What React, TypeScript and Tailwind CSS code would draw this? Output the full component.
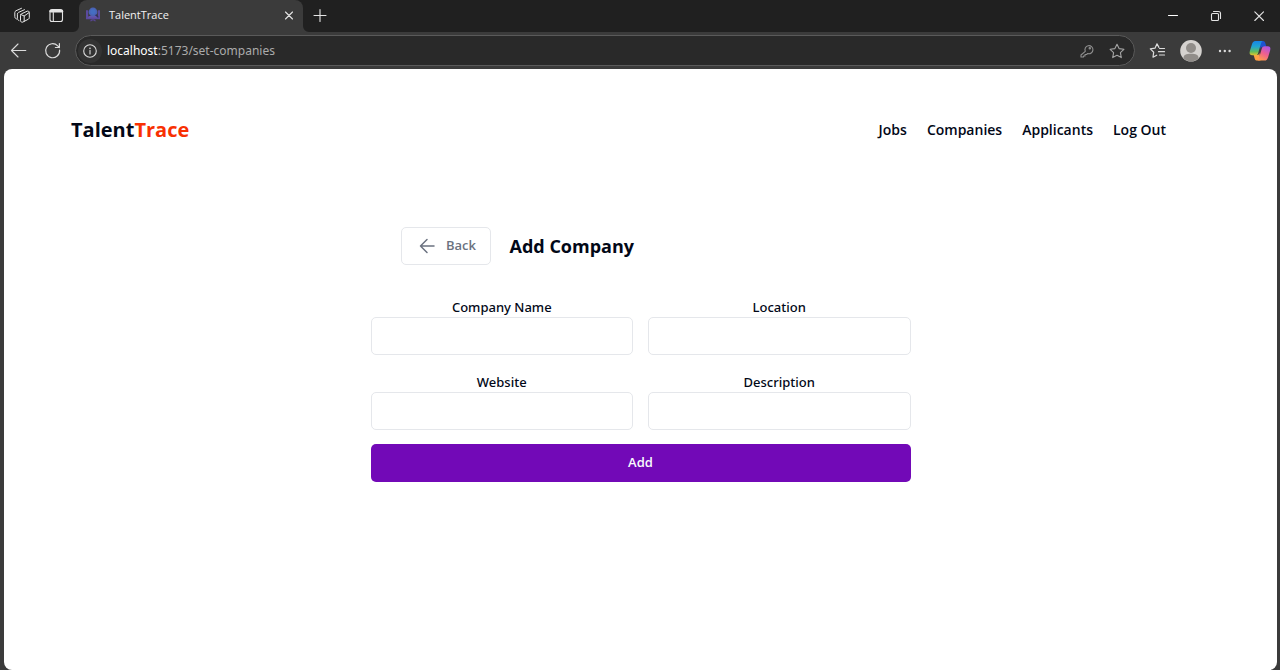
import type { ReactNode } from "react";

const NAV = ["Jobs", "Companies", "Applicants", "Log Out"];

const FIELDS = [
  { id: "name", label: "Company Name" },
  { id: "location", label: "Location" },
  { id: "website", label: "Website" },
  { id: "description", label: "Description" },
];

function Glyph({ size = 16, children, width = 1.1 }: { size?: number; children: ReactNode; width?: number }) {
  return (
    <svg
      width={size}
      height={size}
      viewBox={`0 0 ${size} ${size}`}
      fill="none"
      stroke="currentColor"
      strokeWidth={width}
      strokeLinecap="round"
      strokeLinejoin="round"
      className="shrink-0"
      aria-hidden="true"
    >
      {children}
    </svg>
  );
}

function IconButton({ label, className, children }: { label: string; className: string; children: ReactNode }) {
  return (
    <button type="button" aria-label={label} className={`flex shrink-0 items-center justify-center ${className}`}>
      {children}
    </button>
  );
}

function TabStrip() {
  return (
    <div className="flex h-8 items-center bg-[#202020] text-[#e4e4e4]">
      <div className="flex w-[79px] shrink-0 items-center gap-[18px] pb-0.5 pl-3.5">
        <IconButton label="Workspaces" className="size-4">
          <Glyph width={1}>
            <path d="M6.500 8.300c0-.6.300-1.100.8-1.400l5.900-2.700c1-.4 2.100.2 2.100 1.300v5.200c0 .6-.3 1.100-.8 1.400l-5.700 3c-1.100.5-2.300-.2-2.300-1.400z" />
            <path d="m6.800 7.500 3.400 1.500 4.800-3.400M10.200 9v5.300" />
            <path d="M5 13.600c-1-.4-1.600-1-1.600-2.200V7.200c0-.8.400-1.500 1.100-1.800l6-2.700" />
            <path d="M2.500 12C1.300 11.500.8 10.800.8 9.500V5.600c0-.8.400-1.500 1.100-1.800L7.500 1.300" />
          </Glyph>
        </IconButton>
        <IconButton label="Tab actions" className="size-4">
          <Glyph>
            <rect x="2" y="2.500" width="12.500" height="12" rx="2" />
            <path d="M2.800 4.200h11" strokeWidth="2.800" />
            <path d="M5.300 5.500v9" />
          </Glyph>
        </IconButton>
      </div>
      <div className="relative flex h-8 w-[224px] shrink-0 items-center rounded-t-lg bg-[#3b3b3b] pr-1.5 pb-0.5 pl-[7px]">
        <svg className="absolute bottom-0 -left-1.5" width="6" height="6" aria-hidden="true">
          <path d="M6 0v6H0a6 6 0 0 0 6-6z" fill="#3b3b3b" />
        </svg>
        <svg className="absolute -right-1.5 bottom-0" width="6" height="6" aria-hidden="true">
          <path d="M0 0v6h6a6 6 0 0 1-6-6z" fill="#3b3b3b" />
        </svg>
        <svg width="14" height="16" viewBox="0 0 14 16" className="shrink-0" aria-hidden="true">
          <path d="M0 3.200h2.200v6.300h9.600V3.200H14v9.100H0z" fill="#5b4a9e" />
          <path d="M2 10.500c1-1.800 2.600-2 5-2s4 .2 5 2z" fill="#6656ad" />
          <circle cx="7" cy="5" r="4.400" fill="#4a62b4" />
          <circle cx="7" cy="4.700" r="2.700" fill="#456ec2" />
          <path d="m9.700 7.700 2.600 2.700" stroke="#30305f" strokeWidth="1.300" />
          <path d="M5.700 12.300h2.600l2 2H8.500L7 13.200l-1.500 1.100H3.700z" fill="#57458f" />
        </svg>
        <span className="ml-[9px] flex-1 text-[11px] leading-4 text-[#f2f2f2]">TalentTrace</span>
        <IconButton label="Close tab" className="size-4">
          <Glyph>
            <path d="m4.500 5 7 7m0-7-7 7" />
          </Glyph>
        </IconButton>
      </div>
      <IconButton label="New tab" className="ml-2 size-4 pb-0.5">
        <Glyph>
          <path d="M9 2.500v12M3 8.500h12" />
        </Glyph>
      </IconButton>
      <div className="ml-auto flex items-center gap-[27px] pr-[13px]">
        <IconButton label="Minimize" className="size-4">
          <Glyph>
            <path d="M3.500 7.500h9" stroke="#fff" />
          </Glyph>
        </IconButton>
        <IconButton label="Restore" className="size-4">
          <Glyph>
            <rect x="3.500" y="5.500" width="7" height="7" rx="1" />
            <path d="M5.500 3.500h5a2 2 0 0 1 2 2v5" />
          </Glyph>
        </IconButton>
        <IconButton label="Close" className="size-4">
          <Glyph>
            <path d="m3.800 3.800 8.700 8.700m0-8.700-8.700 8.700" />
          </Glyph>
        </IconButton>
      </div>
    </div>
  );
}

function Toolbar() {
  return (
    <div className="flex h-[37px] items-center bg-[#3b3b3b] pr-[9px] pl-2.5 text-[#dcdcdc]">
      <IconButton label="Back" className="size-[18px]">
        <Glyph size={18}>
          <path d="M15.800 8.500H1.500M8 2 1.500 8.500 8 15" />
        </Glyph>
      </IconButton>
      <IconButton label="Refresh" className="ml-4 size-[18px]">
        <Glyph size={18} width={1.2}>
          <path d="M15.600 8.200A7 7 0 1 1 13.700 3.900L15.400 5.500M15.400 1.500v4h-4" />
        </Glyph>
      </IconButton>
      <div className="ml-[13px] flex h-[31px] min-w-0 flex-1 items-center rounded-full border border-[#5a5a5a] bg-[#292929] pr-[9px] pl-[2px]">
        <button
          type="button"
          aria-label="Site information"
          className="flex size-6 shrink-0 items-center justify-center rounded-full bg-[#333333]"
        >
          <Glyph size={14}>
            <circle cx="7" cy="7" r="6.300" />
            <path d="M7 6.500v3.500" />
            <circle cx="7" cy="4.300" r=".3" />
          </Glyph>
        </button>
        <div className="ml-[5px] min-w-0 flex-1 truncate font-['Noto_Sans',sans-serif] text-[12px] leading-5 text-[#ababab]">
          <span className="text-white">localhost</span>:5173/set-companies
        </div>
        <IconButton label="Saved passwords" className="size-4 text-[#8f8f8f]">
          <Glyph>
            <path d="M6.300 8.300a4 4 0 1 1 2.500 2.200L7.500 11.500H6v1.500H4.500v1H2v-2z" />
            <circle cx="10.800" cy="5.300" r=".7" />
          </Glyph>
        </IconButton>
        <IconButton label="Add to favorites" className="ml-3.5 size-4 text-[#a4a4a4]">
          <Glyph>
            <path d="m8 1.200 2.100 4.400 4.800.7-3.500 3.400.9 4.900L8 12.300l-4.300 2.300.9-4.900L1.100 6.300l4.800-.7z" />
          </Glyph>
        </IconButton>
      </div>
      <IconButton label="Favorites" className="ml-3.5 size-[18px]">
        <Glyph size={18} width={1.2}>
          <path d="M9.900 5.400 8 1.800 6 6.200l-4.700.7L4.700 10.200 4 15.200l3.700-2" />
          <path d="M10.500 6.500h5M9.500 9.700h6M10.500 13h5" />
        </Glyph>
      </IconButton>
      <IconButton label="Profile" className="ml-[13px] size-[22px]">
        <svg width="22" height="22" viewBox="0 0 22 22" aria-hidden="true">
          <circle cx="11" cy="10.800" r="10.800" fill="#d5d2cf" />
          <circle cx="11" cy="8" r="5" fill="#918d89" />
          <path d="M3.500 18.300c0-3.500 2.500-4.500 7.500-4.500s7.500 1 7.500 4.500a10.500 10.500 0 0 1-15 0z" fill="#918d89" />
        </svg>
      </IconButton>
      <IconButton label="Settings and more" className="ml-[15px] size-4">
        <svg width="16" height="16" fill="currentColor" aria-hidden="true">
          <circle cx="3" cy="8" r="1.200" />
          <circle cx="7.800" cy="8" r="1.200" />
          <circle cx="12.600" cy="8" r="1.200" />
        </svg>
      </IconButton>
      <IconButton label="Copilot" className="ml-4 size-[22px]">
        <svg width="22" height="22" viewBox="0 0 22 22" aria-hidden="true">
          <defs>
            <linearGradient id="cool" x1="0" y1="0" x2="0" y2="1">
              <stop offset="0" stopColor="#1685e8" />
              <stop offset=".4" stopColor="#21a6cf" />
              <stop offset=".75" stopColor="#62bd5c" />
              <stop offset="1" stopColor="#e6c62c" />
            </linearGradient>
            <linearGradient id="warm" x1="0.800" y1="0" x2="0.300" y2="1">
              <stop offset="0" stopColor="#a855e8" />
              <stop offset=".5" stopColor="#ee5f91" />
              <stop offset="1" stopColor="#ff9a4c" />
            </linearGradient>
          </defs>
          <path d="M10.500 1H14c1.500 0 2 1 2.500 2.700l.9 3h-3.200c-1.400 0-2.200.7-2.700 2.200z" fill="#1d52cf" />
          <path d="M11.500 20.600H8c-1.500 0-2-1-2.500-2.700l-.8-2.800h3c1.400 0 2.200-.7 2.700-2.200z" fill="#ffa244" />
          <path d="M14 1H6.500c-2 0-3 1.500-3.600 3.400L.8 11.300C.1 13.800 1 15.300 3.400 15.300h3.200c1.500 0 2.200-.9 2.600-2.300l2.700-9.200C12.300 2.200 12.800 1.300 14 1z" fill="url(#cool)" />
          <path d="M8 20.600h7.500c2 0 3-1.500 3.600-3.400l2.100-6.900c.7-2.500-.2-4-2.600-4h-3.200c-1.500 0-2.200.9-2.600 2.300l-2.700 9.200c-.4 1.600-.9 2.500-2.100 2.800z" fill="url(#warm)" />
        </svg>
      </IconButton>
    </div>
  );
}

function SiteHeader() {
  return (
    <header className="flex items-center justify-between pt-[45px] pr-[111px] pl-[67px]">
      <a href="#" className="text-[20px] leading-8 font-bold text-[#020817]">
        Talent<span className="text-[#f83002]">Trace</span>
      </a>
      <nav className="flex gap-5 text-[14px] leading-6 font-semibold text-[#020817]">
        {NAV.map((item) => (
          <a key={item} href="#">
            {item}
          </a>
        ))}
      </nav>
    </header>
  );
}

function CompanyForm() {
  return (
    <form className="mx-auto mt-[81px] w-full max-w-[540px]" onSubmit={(e) => e.preventDefault()}>
      <div className="flex items-center gap-[19px] px-[30px]">
        <button
          type="button"
          className="flex h-[38px] w-[90px] items-center justify-center gap-[11px] rounded-[5px] border border-[#e5e7eb] pl-1 text-[13px] font-semibold text-[#6b7280]"
        >
          <Glyph width={1.5}>
            <path d="M15 8H1.500M8 1.500 1.500 8 8 14.500" />
          </Glyph>
          Back
        </button>
        <h1 className="text-[18px] leading-7 font-bold text-[#020817]">Add Company</h1>
      </div>
      <div className="mt-8 grid grid-cols-2 gap-x-[15px] gap-y-[17px]">
        {FIELDS.map(({ id, label }) => (
          <div key={id} className="flex flex-col">
            <label
              htmlFor={id}
              className="text-center font-['Noto_Sans',sans-serif] text-[13px] leading-5 font-medium text-[#020817]"
            >
              {label}
            </label>
            <input
              id={id}
              name={id}
              type="text"
              className="h-[38px] w-full rounded-[5px] border border-[#e5e7eb] bg-white px-3 text-[13px]"
            />
          </div>
        ))}
      </div>
      <button
        type="submit"
        className="mt-3.5 h-[38px] w-full rounded-[5px] bg-[#7209b7] text-[13px] font-semibold text-[#f8fafc]"
      >
        Add
      </button>
    </form>
  );
}

export default function App() {
  return (
    <div className="flex min-h-screen flex-col bg-[#3b3b3b] font-['Open_Sans','Noto_Sans',sans-serif]">
      <TabStrip />
      <Toolbar />
      <main className="mr-[3px] ml-1 flex-1 rounded-lg bg-white">
        <SiteHeader />
        <CompanyForm />
      </main>
    </div>
  );
}
